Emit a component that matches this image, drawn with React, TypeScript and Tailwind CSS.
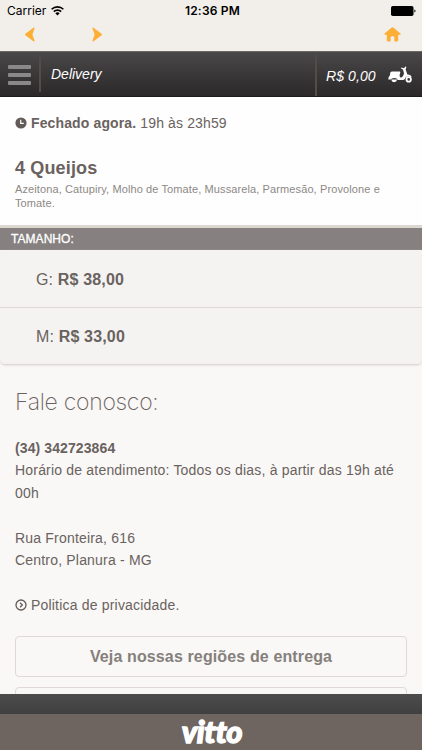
const options = [
  { size: 'G', price: 'R$ 38,00' },
  { size: 'M', price: 'R$ 33,00' },
];

function StatusBar() {
  return (
    <div className="grid h-5 shrink-0 grid-cols-3 items-center pt-0.5 text-[12px] text-black">
      <div className="flex items-center gap-[5px] pl-[7px]">
        <span className="font-['Inter'] text-[12px] leading-none">Carrier</span>
        <svg width="13" height="10" viewBox="0 0 13 10" fill="none" stroke="#000" strokeWidth="1.6">
          <path d="M0.6 3.3a8.4 8.4 0 0 1 11.8 0" />
          <path d="M2.8 5.6a5.3 5.3 0 0 1 7.4 0" />
          <path d="M6.5 9.6L4.3 7.3a3.2 3.2 0 0 1 4.4 0z" fill="#000" stroke="none" />
        </svg>
      </div>
      <span className="pl-[3px] text-center font-['Inter'] text-[12px] leading-none font-semibold tracking-[0.2px]">12:36 PM</span>
      <div className="flex justify-end pr-[6px]">
        <svg width="25" height="10" viewBox="0 0 25 10">
          <rect x="0" y="0" width="22.5" height="10" rx="1.8" fill="#000" />
          <path d="M23.4 3.4v3.2a1.7 1.7 0 0 0 0-3.2z" fill="#000" />
        </svg>
      </div>
    </div>
  );
}

function BrowserNav() {
  return (
    <div className="flex h-[31px] shrink-0 items-start pt-[7px] pl-[25px] pr-[21px]">
      <svg width="10" height="15" viewBox="0 0 10 15" fill="#fcae35">
        <path d="M8.8 0.5Q9.9 0.5 9.5 1.6L7.4 7.5L9.5 13.4Q9.8 14.6 8.7 14.4L0.4 8.2Q-0.2 7.5 0.4 6.8z" />
      </svg>
      <svg className="ml-[57px]" width="10" height="15" viewBox="0 0 10 15" fill="#fcae35">
        <path d="M1.2 0.5Q0.1 0.5 0.5 1.6L2.6 7.5L0.5 13.4Q0.2 14.6 1.3 14.4L9.6 8.2Q10.2 7.5 9.6 6.8z" />
      </svg>
      <svg className="ml-auto" width="17" height="15" viewBox="0 0 17 15" fill="#fcae35">
        <path d="M7.7 0.4Q8.5-0.1 9.3 0.4L16.4 6.6Q16.9 7.6 15.8 7.7H14.2V13.1Q14.2 14.5 12.9 14.5H10.4V10.5Q10.4 9 8.5 9T6.6 10.5V14.5H4.1Q2.8 14.5 2.8 13.1V7.7H1.2Q0.1 7.6 0.6 6.6z" />
      </svg>
    </div>
  );
}

function Header() {
  return (
    <header className="flex h-[46px] shrink-0 border-t border-b border-t-[#6b6866] border-b-[#1d1b1c] bg-linear-to-b from-[#4a4848] to-[#2a2829] text-white italic">
      <div className="flex w-[39px] items-center pt-px pl-2">
        <div className="flex flex-col gap-1">
          <span className="h-1 w-[23px] rounded-[1px] bg-[#8a8888]" />
          <span className="h-1 w-[23px] rounded-[1px] bg-[#8a8888]" />
          <span className="h-1 w-[23px] rounded-[1px] bg-[#8a8888]" />
        </div>
      </div>
      <div className="mb-1 w-0.5 bg-linear-to-b from-[#4a4848] to-[#544c48] to-30%" />
      <span className="pt-[12px] pl-[10px] text-[14px] leading-5">Delivery</span>
      <div className="ml-auto w-0.5 bg-linear-to-b from-[#4a4848] to-[#544c48] to-30%" />
      <div className="flex w-[105px] items-start pl-[9px]">
        <span className="pt-[14px] text-[14px] leading-5 tracking-[0.1px]">R$ 0,00</span>
        <svg className="mt-[14px] ml-[12px] shrink-0" width="24" height="17" viewBox="0 0 24 17" fill="#fff">
          <path d="M3.8 5.4H11.4Q12.6 5.4 12.3 6.6L11.5 9.4Q12 11.6 13 11.6Q14.8 11.4 16 7.4L15 3.4L13 2.6L13.4 1.5L16 2.3L17.4 0.5L18.4 0.9L17.6 3.4L19.6 9L18.2 10Q17 14 15 14H9.8Q9.2 12 6.3 12T2.6 13.6H0.3Q0.2 10.6 2 9.2L2.2 7Q2.4 5.4 3.8 5.4z" />
          <path d="M3.2 13.6H9.1Q8.6 16.2 6.1 16.2T3.2 13.6z" />
          <path d="M17.8 9.4Q20.6 7.4 23.6 10.2L22.8 11.2Q20.6 9.6 18.4 11.2z" />
          <circle cx="20.7" cy="13.4" r="2.2" fill="none" stroke="#fff" strokeWidth="1.8" />
        </svg>
      </div>
    </header>
  );
}

function Product() {
  return (
    <section className="h-[128px] shrink-0 bg-[#fefefe] px-[15px] pt-[15px]">
      <p className="flex items-center text-[14px] leading-[22px] tracking-[0.13px] text-[#6a625e]">
        <svg className="mr-1" width="12" height="12" viewBox="0 0 12 12">
          <circle cx="6" cy="6" r="5.6" fill="#635b57" />
          <path d="M5.7 2.8V6.4H8.8" fill="none" stroke="#fff" strokeWidth="1.2" />
        </svg>
        <b className="mr-1">Fechado agora.</b> 19h às 23h59
      </p>
      <h1 className="mt-[22px] text-[18px] leading-6 font-bold tracking-[0.15px] text-[#6a625e]">4 Queijos</h1>
      <p className="mt-0.5 text-[11px] leading-[14px] tracking-[0.11px] text-[#8d8885]">
        Azeitona, Catupiry, Molho de Tomate, Mussarela, Parmesão, Provolone e Tomate.
      </p>
    </section>
  );
}

function Sizes() {
  return (
    <section className="shrink-0">
      <h2 className="h-[25px] border-t-3 border-[#dcd8d0] bg-[#868180] pl-[11px] text-[12px] leading-[23px] tracking-[0.05px] text-white [-webkit-text-stroke:0.3px_#fff]">
        TAMANHO:
      </h2>
      <ul className="rounded-b-[5px] border-b border-[#dbd8d6] bg-[#f4f3f2] shadow-[0_1px_2px_#e8e5e3]">
        {options.map((o, i) => (
          <li
            key={o.size}
            className={
              i === 0
                ? 'h-[58px] border-b border-[#dbd8d6] pt-px pl-9 text-[16px] leading-[58px] tracking-[0.16px] text-[#6a625e]'
                : 'h-[56px] pl-9 text-[16px] leading-[57px] tracking-[0.16px] text-[#6a625e]'
            }
          >
            {o.size}: <b>{o.price}</b>
          </li>
        ))}
      </ul>
    </section>
  );
}

function Contact() {
  return (
    <section className="min-h-0 flex-1 overflow-hidden px-[15px] text-[14px] leading-[22.4px] tracking-[0.19px] text-[#6a625e]">
      <h2 className="mt-[22px] font-['Inter'] text-[23px] leading-[30px] font-[200] tracking-[-0.3px]">Fale conosco:</h2>
      <p className="mt-[20px] font-bold tracking-[0.1px]">(34) 342723864</p>
      <p>Horário de atendimento: Todos os dias, à partir das 19h até 00h</p>
      <p className="mt-[22.4px]">
        Rua Fronteira, 616
        <br />
        Centro, Planura - MG
      </p>
      <p className="mt-[22.4px] flex items-center">
        <svg className="mr-1" width="12" height="12" viewBox="0 0 12 12" fill="none" stroke="#635b57" strokeWidth="1.3">
          <circle cx="6" cy="6" r="5" />
          <path d="M5.1 3.8L7.3 6L5.1 8.2" />
        </svg>
        Politica de privacidade.
      </p>
      <button className="mt-[20px] block h-[41px] w-full rounded-[4px] border border-[#e0d9d6] text-[16px] font-bold tracking-[0.13px] text-[#85807c]">
        Veja nossas regiões de entrega
      </button>
      <button className="mt-[10px] block h-[41px] w-full rounded-[4px] border border-[#e0d9d6]" />
    </section>
  );
}

function Footer() {
  return (
    <footer className="shrink-0">
      <div className="h-5 bg-linear-to-b from-[#4c4c4c] to-[#404040]" />
      <div className="flex h-9 items-center justify-center bg-[#6f6560]">
        <span className="-mt-0.5 pl-0.5 font-['Lato'] text-[31px] leading-none font-black tracking-[-0.3px] text-white italic [-webkit-text-stroke:1.4px_#fff]">vitto</span>
      </div>
    </footer>
  );
}

export default function App() {
  return (
    <main className="flex h-[750px] w-[422px] flex-col overflow-hidden bg-[#f9f8f6] font-['Liberation_Sans',sans-serif]">
      <div className="shrink-0 bg-[#f2eee9]">
        <StatusBar />
        <BrowserNav />
      </div>
      <Header />
      <Product />
      <Sizes />
      <Contact />
      <Footer />
    </main>
  );
}
